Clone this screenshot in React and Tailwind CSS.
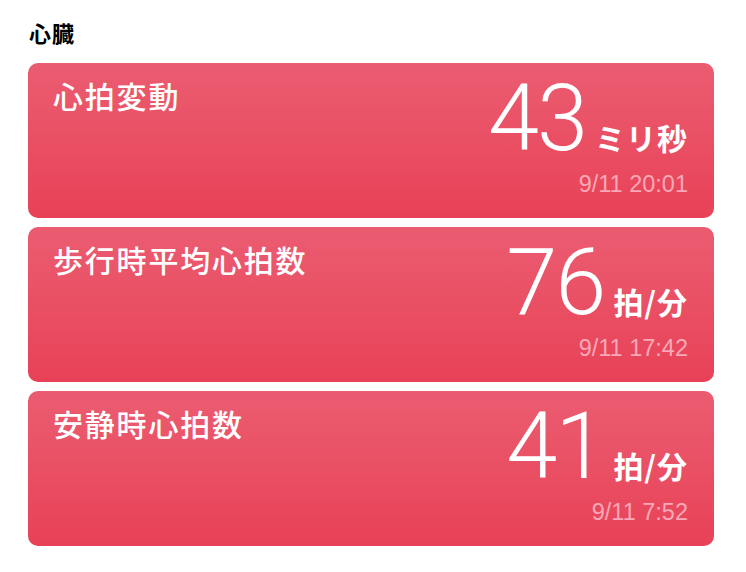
const metrics = [
  { title: '心拍変動', value: '43', unit: 'ミリ秒', time: '9/11 20:01' },
  { title: '歩行時平均心拍数', value: '76', unit: '拍/分', time: '9/11 17:42' },
  { title: '安静時心拍数', value: '41', unit: '拍/分', time: '9/11 7:52' },
]

function MetricCard({ title, value, unit, time }) {
  return (
    <div className="h-[155px] rounded-[10px] bg-gradient-to-b from-[#eb5c71] to-[#e84157] flex justify-between pl-[25px] pr-[26px] pt-[10px] text-white">
      <p className="pt-[2px] text-[30px] font-medium tracking-[1.8px] leading-[40px] font-['Noto_Sans_CJK_JP',sans-serif]">{title}</p>
      <div className="flex flex-col items-end">
        <div className="flex items-baseline gap-[9px]">
          <span className="text-[92px] font-light leading-[92px] font-['Roboto',sans-serif] tracking-[-2px]">{value}</span>
          <span className="text-[30px] font-bold tracking-[1px] leading-none font-['Noto_Sans_CJK_JP',sans-serif]">{unit}</span>
        </div>
        <span className="mt-[8px] text-[23.5px] leading-none text-[#f9a8b8] font-['Liberation_Sans',sans-serif]">{time}</span>
      </div>
    </div>
  )
}

export default function App() {
  return (
    <div className="w-[746px] h-[572px] bg-white pl-[28px] pr-[32px] pt-[17px] font-['Noto_Sans_CJK_JP',sans-serif]">
      <h2 className="text-[22px] font-bold text-black leading-[30px] ml-[1px] tracking-[1px]">心臓</h2>
      <div className="mt-[16px] flex flex-col gap-[9px]">
        {metrics.map((m) => (
          <MetricCard key={m.title} {...m} />
        ))}
      </div>
    </div>
  )
}
